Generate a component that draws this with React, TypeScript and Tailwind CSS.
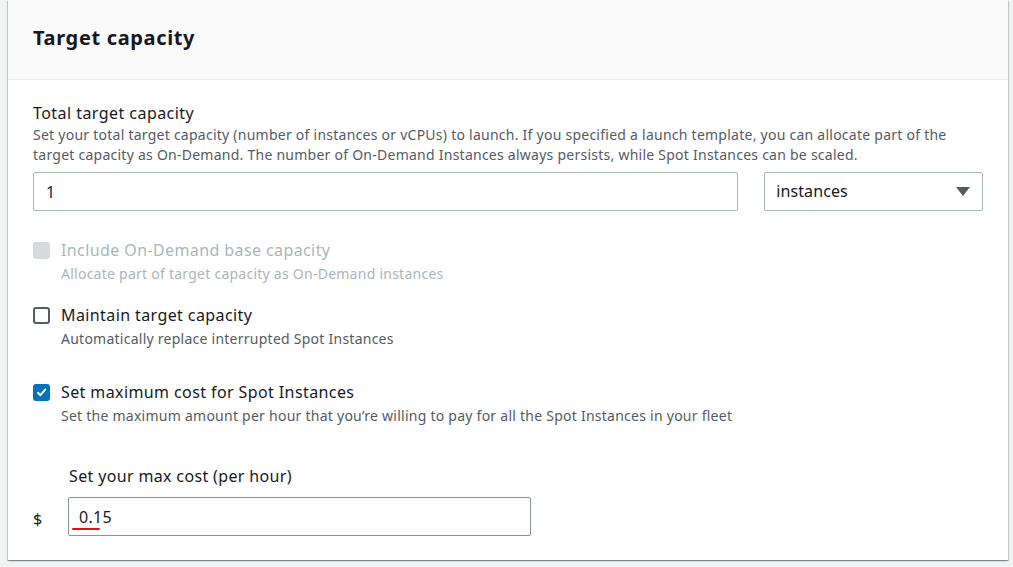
import React from "react";

const font = { fontFamily: '"Noto Sans", "Open Sans", Arial, sans-serif' };

function Check({ state }: { state: "disabled" | "off" | "on" }) {
  if (state === "disabled")
    return <div className="w-[17px] h-[17px] rounded-[3px] bg-[#d5dbdb] shrink-0" />;
  if (state === "off")
    return <div className="w-[17px] h-[17px] rounded-[3px] border-2 border-[#545b64] bg-white shrink-0" />;
  return (
    <div className="w-[17px] h-[17px] rounded-[3px] bg-[#0073bb] shrink-0 flex items-center justify-center">
      <svg width="11" height="11" viewBox="0 0 11 11">
        <path d="M2 5.8 L4.4 8.2 L9.2 2.6" stroke="white" strokeWidth="2" fill="none" strokeLinecap="round" strokeLinejoin="round" />
      </svg>
    </div>
  );
}

function Option({ state, label, desc }: { state: "disabled" | "off" | "on"; label: string; desc: string }) {
  const dis = state === "disabled";
  return (
    <div className="flex flex-col">
      <div className="flex items-center gap-[11px] h-[24px]">
        <Check state={state} />
        <span className={`text-[16px] tracking-[0.4px] ${dis ? "text-[#aab7b8]" : "text-[#16191f]"}`}>{label}</span>
      </div>
      <div className={`pl-[28px] text-[14px] tracking-[0.25px] leading-[20px] mt-[2px] ${dis ? "text-[#aab7b8]" : "text-[#545b64]"}`}>{desc}</div>
    </div>
  );
}

export default function App() {
  return (
    <div className="w-[1013px] h-[567px] bg-[#f2f3f3] overflow-hidden pl-[8px] pr-[5px]" style={font}>
      <div className="bg-white h-[560px] shadow-[0_1px_1px_0_rgba(0,28,36,0.3),1px_1px_1px_0_rgba(0,28,36,0.15),-1px_1px_1px_0_rgba(0,28,36,0.15)]">
        <div className="h-[80px] bg-[#fafafa] border-b border-[#eaeded] flex items-center pl-[25px] pb-[3px]">
          <h2 className="text-[20px] font-bold tracking-[0.65px] text-[#16191f]">Target capacity</h2>
        </div>
        <div className="pl-[25px] pr-[25px] pt-[22px]">
          <div className="text-[16px] tracking-[0.45px] text-[#16191f] leading-[22px]">Total target capacity</div>
          <div className="text-[14px] tracking-[0.25px] leading-[20px] text-[#545b64] mt-[1px] w-[925px]">
            Set your total target capacity (number of instances or vCPUs) to launch. If you specified a launch template, you can allocate part of the target capacity as On-Demand. The number of On-Demand Instances always persists, while Spot Instances can be scaled.
          </div>
          <div className="flex gap-[26px] mt-[7px]">
            <div className="w-[706px] h-[39px] border border-[#aab7b8] rounded-[2px] flex items-center pl-[12px] text-[16px] text-[#16191f]">1</div>
            <div className="w-[219px] h-[39px] border border-[#aab7b8] rounded-[2px] flex items-center justify-between pl-[11px] pr-[12px] pb-[1px] text-[16px] tracking-[0.1px] text-[#16191f]">
              <span>instances</span>
              <svg width="14" height="9" viewBox="0 0 14 9"><path d="M0 0 H14 L7 9 Z" fill="#545b64" /></svg>
            </div>
          </div>
          <div className="flex flex-col gap-[19px] mt-[27px]">
            <Option state="disabled" label="Include On-Demand base capacity" desc="Allocate part of target capacity as On-Demand instances" />
            <Option state="off" label="Maintain target capacity" desc="Automatically replace interrupted Spot Instances" />
            <div className="mt-[12px]">
              <Option state="on" label="Set maximum cost for Spot Instances" desc="Set the maximum amount per hour that you’re willing to pay for all the Spot Instances in your fleet" />
            </div>
          </div>
          <div className="pl-[36px] mt-[39px] text-[16px] tracking-[0.35px] text-[#16191f] leading-[22px]">Set your max cost (per hour)</div>
          <div className="flex items-center mt-[10px]">
            <span className="w-[35px] text-[16px] text-[#16191f] pt-[4px]">$</span>
            <div className="w-[463px] h-[39px] border border-[#879596] rounded-[2px] flex items-center pl-[10px] text-[16px] tracking-[0.3px] text-[#16191f]">
              <span className="relative">
                0.15
                <span className="absolute left-[-7px] right-[12px] bottom-[-1px] h-[2px] bg-[#e01010] rounded-full" />
              </span>
            </div>
          </div>
        </div>
      </div>
    </div>
  );
}
